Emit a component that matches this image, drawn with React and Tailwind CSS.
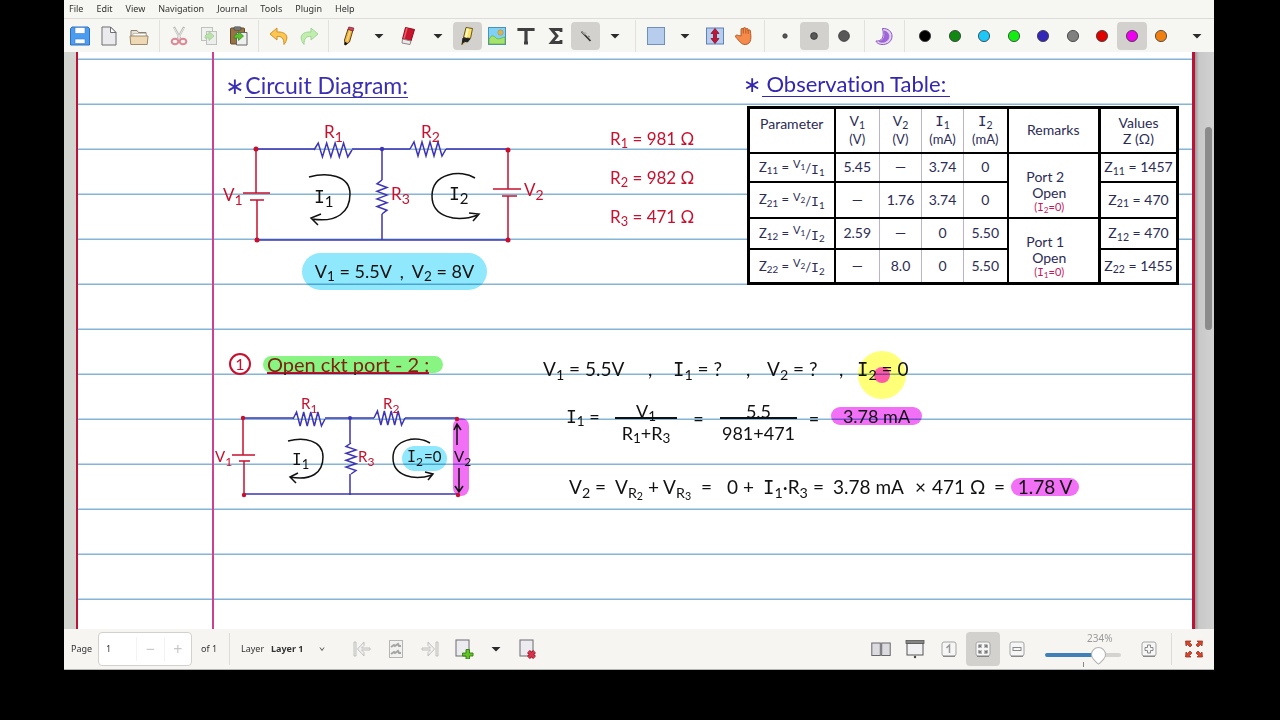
import clsx from "clsx";
import React, { useState } from "react";

const COLORS = [
	{ name: "Black", value: "#000000" },
	{ name: "Green", value: "#118811" },
	{ name: "Light blue", value: "#1cc8f8" },
	{ name: "Light green", value: "#12ee12" },
	{ name: "Blue", value: "#3328b8" },
	{ name: "Gray", value: "#808080" },
	{ name: "Red", value: "#e00000" },
	{ name: "Magenta", value: "#f000f0" },
	{ name: "Orange", value: "#f08010" },
];

const MENUS = ["File", "Edit", "View", "Navigation", "Journal", "Tools", "Plugin", "Help"];

/* ---------- toolbar icons, all on a 20x20 grid ---------- */

const Icon = ({ children, dim }) => (
	<svg
		viewBox="0 0 20 20"
		className={clsx("w-5 h-5 shrink-0", dim && "opacity-50")}
		fill="none"
		aria-hidden="true">
		{children}
	</svg>
);

const SaveIcon = () => (
	<Icon>
		<path d="M2 1h16l1.500 1.500V19H.5V2.500z" fill="#4a9df0" stroke="#2f6fc0" />
		<rect x="5" y="1.500" width="10" height="6" fill="#fff" stroke="#3a7fd0" strokeWidth=".6" />
		<rect x="5" y="13" width="10" height="4.500" fill="#fff" stroke="#3a7fd0" strokeWidth=".6" />
	</Icon>
);

const NewIcon = () => (
	<Icon>
		<path d="M3 1h8.500L17 6.500V19H3z" fill="#ebebee" stroke="#6e6e74" />
		<path d="M11.500 1v5.500H17z" fill="#fff" stroke="#6e6e74" />
	</Icon>
);

const OpenIcon = () => (
	<Icon>
		<path d="M2 17V4.500h6l1.500 2H17V17z" fill="#e9e2d6" stroke="#8c8273" />
		<path d="M4 7.500h13v4H4z" fill="#fff" stroke="#aaa294" strokeWidth=".6" />
		<path d="M1 10h18l-.8 8.500H1.800z" fill="#efd9b4" stroke="#9b8a6c" />
	</Icon>
);

const CutIcon = () => (
	<Icon dim>
		<path d="M5 1l6.500 12M15 1L8.500 13" stroke="#777" strokeWidth="2.200" />
		<path d="M5.300 2l6 11M14.700 2l-6 11" stroke="#ddd" />
		<ellipse cx="6" cy="15.500" rx="3.300" ry="2.800" stroke="#c3203c" strokeWidth="2" />
		<ellipse cx="14" cy="15.500" rx="3.300" ry="2.800" stroke="#c3203c" strokeWidth="2" />
	</Icon>
);

const CopyIcon = () => (
	<Icon dim>
		<rect x="2.500" y="1.500" width="11" height="13" fill="#eef0f0" stroke="#88908c" />
		<rect x="7.500" y="5.500" width="10" height="13" fill="#e4e8e6" stroke="#88908c" />
		<path d="M6 12c0-3 1-4 4-4V5.500l5 4.500-5 4.500V12c-2 0-3 .5-4 0z" fill="#7fd35f" stroke="#47963a" strokeWidth=".7" />
	</Icon>
);

const PasteIcon = () => (
	<Icon>
		<rect x="1.500" y="2" width="14" height="16" rx="1" fill="#9a7440" stroke="#5f4a2a" />
		<rect x="5" y=".8" width="7" height="3.500" rx="1" fill="#777" stroke="#444" strokeWidth=".6" />
		<path d="M7.500 6.500H18V19H7.500z" fill="#edf0ee" stroke="#666" />
		<path d="M5 12c0-3 2-4 4.500-4V5.500l5 4.500-5 4.500V12C8 12 6 12.500 5 12z" fill="#5cc22e" stroke="#337d1c" strokeWidth=".7" />
	</Icon>
);

const UndoIcon = () => (
	<Icon>
		<path d="M8 2L1 8l7 6v-3.500c4.500-.5 7 1.500 7 8 6-8 2-13-7-12.500z" fill="#fbc653" stroke="#cf8f22" strokeLinejoin="round" />
	</Icon>
);

const RedoIcon = () => (
	<Icon dim>
		<path d="M12 2l7 6-7 6v-3.500c-4.500-.5-7 1.500-7 8-6-8-2-13 7-12.500z" fill="#8be86a" stroke="#4faf3c" strokeLinejoin="round" />
	</Icon>
);

const PencilIcon = () => (
	<Icon>
		<path d="M9 3l5 1-3.500 12-4.500 3-.5-5z" fill="#f3b43b" stroke="#4a3312" strokeWidth=".9" />
		<path d="M11.500 3.500L8 15" stroke="#fbd98a" strokeWidth="1.200" />
		<path d="M9 3.500l.8-2.500 5 1-.8 3z" fill="#d8425c" stroke="#6e1f2a" strokeWidth=".7" />
		<path d="M6 16.500V19l2.300-1.500z" fill="#111" stroke="#111" />
	</Icon>
);

const EraserIcon = () => (
	<Icon>
		<path d="M7.500 1.500l9 2L13 15l-8.500-2z" fill="#c8142c" stroke="#8a0c1e" />
		<path d="M9 2l-3 10.500" stroke="#ee5a68" strokeWidth="1.500" />
		<path d="M4.500 13l8.500 2-1 3.500-8-1.500z" fill="#eeeaea" stroke="#8f8585" />
	</Icon>
);

const HighlighterIcon = () => (
	<Icon>
		<path d="M9 1.500l6.500 1-2 10-7-1z" fill="#f9e36b" stroke="#69541a" />
		<path d="M10.800 2.500L9 11.500" stroke="#fff8c4" strokeWidth="2" />
		<path d="M6 12l7 1-2.500 3-2.500-.5-3 3z" fill="#222" stroke="#222" />
		<path d="M5 18.500l2.500-2.500v2z" fill="#e7bf25" />
	</Icon>
);

const ImageIcon = () => (
	<Icon>
		<rect x="1.500" y="1.500" width="17" height="17" fill="#7fd2f7" stroke="#4a90bd" />
		<circle cx="13.500" cy="6.500" r="2.700" fill="#d8b35a" stroke="#b58a38" strokeWidth=".6" />
		<path d="M2 13c3-5 5-3 7-1s5 0 9-1v7H2z" fill="#a4e46a" stroke="#62a83d" strokeWidth=".7" />
	</Icon>
);

const TextIcon = () => (
	<Icon>
		<path d="M3 5V3.500h14V5M10 3.500v13.500M8 17h4" stroke="#3f3f3f" strokeWidth="3.200" />
	</Icon>
);

const SigmaIcon = () => (
	<Icon>
		<path d="M15 6V3.500H5.500L11 10l-5.500 6.500H15V14" stroke="#3f3f3f" strokeWidth="2.800" />
	</Icon>
);

const WandIcon = () => (
	<Icon>
		<path d="M5.500 5.500l9 9.500" stroke="#333" strokeWidth="1.800" />
		<path d="M6 5.500l3 3.200" stroke="#fff" strokeWidth=".8" />
		<path d="M9 6.500l1 1M12 10l2 1" stroke="#777" />
	</Icon>
);

const RectIcon = () => (
	<Icon>
		<rect x="1.500" y="1.500" width="17" height="17" fill="#b6cdee" stroke="#6f8fc0" />
	</Icon>
);

const VerticalSpaceIcon = () => (
	<Icon>
		<rect x="1.500" y="2" width="17" height="16" fill="#b6cdee" stroke="#5f82b8" />
		<path d="M10 2.500l4 5h-2.500v5H14l-4 5-4-5h2.500v-5H6z" fill="#c0143a" stroke="#84102a" strokeWidth=".8" />
	</Icon>
);

const HandIcon = () => (
	<Icon>
		<path
			d="M7 10V3.500c0-1.500 2.300-1.500 2.300 0V2.800c0-1.600 2.500-1.600 2.500 0v.6c.3-1.400 2.400-1.200 2.400.3v1c.3-1.200 2.300-1 2.300.4 0 3 .8 5 .2 8.400-.5 3-2.500 5-5.500 5-4 0-5.500-3-9.500-7.500-1-1.500 1-2.500 2.500-1.500z"
			fill="#f58a4b"
			stroke="#a9501c"
			strokeWidth=".9"
		/>
		<path d="M9.300 3.500v4M11.800 3.500v4M14.200 4v4" stroke="#a9501c" strokeWidth=".8" />
	</Icon>
);

const Dot = ({ r, fill = "#585858" }) => (
	<Icon>
		<circle cx="10" cy="10" r={r} fill={fill} stroke="#333" strokeWidth=".8" />
	</Icon>
);

const FillIcon = () => (
	<Icon>
		<path d="M8.500 2.500C21 2 21 17.500 9.500 18.500c-4 .3-7-1.500-7.500-3.500 5 .5 9-3 6.500-12.500z" fill="#e4d2f5" stroke="#8a55c0" />
		<path d="M10 5c6 .5 7 9 .5 11-3 .8-4.500 0-5.500-.5C9.500 14.500 12 10 10 5z" fill="#a065dc" stroke="#8a55c0" strokeWidth=".6" />
	</Icon>
);

const Arrow = () => (
	<Icon>
		<path d="M5.500 8h9L10 12.500z" fill="#2b2b2b" />
	</Icon>
);

/* ---------- page bar icons ---------- */

const StepIcon = ({ flip }) => (
	<Icon dim>
		<g transform={flip ? "matrix(-1 0 0 1 20 0)" : undefined} stroke="#888" strokeWidth="1">
			<path d="M2 3h2v14H2z" fill="#e8e8e8" />
			<path d="M12 3L5.500 10l6.500 7v-3.500L9.500 11H18V9H9.500L12 6.500z" fill="#eee" />
		</g>
	</Icon>
);

const AnnotatedIcon = () => (
	<Icon dim>
		<rect x="3.500" y="1.500" width="13" height="17" fill="#eee" stroke="#777" />
		<path d="M5 8l3-2 1 1 3-2 1 2h2M5 15l3-2 1 1 3-2 1 2h2" stroke="#555" strokeWidth="2" />
	</Icon>
);

const AddPageIcon = () => (
	<Icon>
		<rect x="2" y="1" width="13" height="16" fill="#ececf0" stroke="#6b6b70" />
		<path d="M12 10.500h3.500V14H19v3h-3.500v3H12v-3H8.500v-3H12z" fill="#62c226" stroke="#347c14" strokeWidth=".9" />
	</Icon>
);

const DeletePageIcon = () => (
	<Icon>
		<rect x="2" y="1" width="13" height="16" fill="#ececf0" stroke="#6b6b70" />
		<path d="M10.500 12.500l6 6M16.500 12.500l-6 6" stroke="#8c1226" strokeWidth="4" />
		<path d="M10.500 12.500l6 6M16.500 12.500l-6 6" stroke="#d8344c" strokeWidth="2.500" />
	</Icon>
);

const PairedIcon = () => (
	<Icon>
		<rect x=".8" y="4" width="8.500" height="12.500" fill="#dcdce0" stroke="#66666c" />
		<rect x="10.700" y="4" width="8.500" height="12.500" fill="#dcdce0" stroke="#66666c" />
	</Icon>
);

const PresentIcon = () => (
	<Icon>
		<rect x="2" y="4" width="16" height="12" fill="#f1f1f4" stroke="#555" />
		<rect x="1" y="1.500" width="18" height="3" fill="#858585" stroke="#555" strokeWidth=".8" />
		<circle cx="10" cy="18" r="1.200" fill="#444" />
	</Icon>
);

const Tile = ({ children }) => (
	<Icon>
		<rect x="3" y="3" width="14" height="14" rx="2" fill="#f6f6f6" stroke="#a4a4a4" />
		<path d="M4 17.300h12" stroke="#777" />
		{children}
	</Icon>
);

const ZoomFitIcon = () => (
	<Tile>
		<path
			d="M6 9V6h3M11 6h3v3M14 11v3h-3M9 14H6v-3M6 6l2.500 2.500M14 6l-2.500 2.500M14 14l-2.500-2.500M6 14l2.500-2.500"
			stroke="#777"
			strokeWidth="1.200"
		/>
	</Tile>
);

const FullscreenIcon = () => (
	<Icon>
		<g fill="#d8452c" stroke="#8f2a18" strokeWidth=".7">
			<path d="M1.500 2H7L5.500 3.500 8 6 6 8 3.500 5.500 2 7z" />
			<path d="M18.500 2H13l1.500 1.500L12 6l2 2 2.500-2.500L18 7z" />
			<path d="M1.500 18H7l-1.500-1.500L8 14l-2-2-2.500 2.500L2 13z" />
			<path d="M18.500 18H13l1.500-1.500L12 14l2-2 2.500 2.500L18 13z" />
		</g>
	</Icon>
);

/* ---------- window chrome ---------- */

const Tool = ({ label, active, onClick, children }) => (
	<button
		type="button"
		aria-label={label}
		onClick={onClick}
		className={clsx(
			"flex-1 h-7 flex items-center justify-center rounded cursor-pointer",
			active && "bg-[#d3d1cd]"
		)}>
		{children}
	</button>
);

const Separator = () => (
	<div className="w-[11px] h-8 flex justify-center">
		<div className="w-px bg-[#e2e1dd]" />
	</div>
);

const Toolbar = () => {
	const [tool, setTool] = useState("Highlighter");
	const [size, setSize] = useState("Medium");
	const [color, setColor] = useState("Magenta");

	return (
		<div className="h-[34px] flex items-center pl-px border-t border-[#dddcd8]">
			<Tool label="Save"><SaveIcon /></Tool>
			<Tool label="New"><NewIcon /></Tool>
			<Tool label="Open"><OpenIcon /></Tool>
			<Separator />
			<Tool label="Cut"><CutIcon /></Tool>
			<Tool label="Copy"><CopyIcon /></Tool>
			<Tool label="Paste"><PasteIcon /></Tool>
			<Separator />
			<Tool label="Undo"><UndoIcon /></Tool>
			<Tool label="Redo"><RedoIcon /></Tool>
			<Separator />
			<Tool label="Pen" active={tool === "Pen"} onClick={() => setTool("Pen")}>
				<PencilIcon />
			</Tool>
			<Tool label="Pen options"><Arrow /></Tool>
			<Tool label="Eraser" active={tool === "Eraser"} onClick={() => setTool("Eraser")}>
				<EraserIcon />
			</Tool>
			<Tool label="Eraser options"><Arrow /></Tool>
			<Tool
				label="Highlighter"
				active={tool === "Highlighter"}
				onClick={() => setTool("Highlighter")}>
				<HighlighterIcon />
			</Tool>
			<Tool label="Image"><ImageIcon /></Tool>
			<Tool label="Text"><TextIcon /></Tool>
			<Tool label="Formula"><SigmaIcon /></Tool>
			<Tool label="Default tool" active><WandIcon /></Tool>
			<Tool label="Drawing type"><Arrow /></Tool>
			<Separator />
			<Tool label="Select rectangle"><RectIcon /></Tool>
			<Tool label="Selection type"><Arrow /></Tool>
			<Tool label="Vertical space"><VerticalSpaceIcon /></Tool>
			<Tool label="Hand"><HandIcon /></Tool>
			<Separator />
			<Tool label="Fine" active={size === "Fine"} onClick={() => setSize("Fine")}>
				<Dot r={2.2} />
			</Tool>
			<Tool label="Medium" active={size === "Medium"} onClick={() => setSize("Medium")}>
				<Dot r={3.4} />
			</Tool>
			<Tool label="Thick" active={size === "Thick"} onClick={() => setSize("Thick")}>
				<Dot r={5.4} />
			</Tool>
			<Separator />
			<Tool label="Fill"><FillIcon /></Tool>
			<Separator />
			{COLORS.map((c) => (
				<Tool
					key={c.name}
					label={c.name}
					active={color === c.name}
					onClick={() => setColor(c.name)}>
					<Dot r={5.6} fill={c.value} />
				</Tool>
			))}
			<button
				type="button"
				aria-label="More"
				className="w-[38px] h-7 flex items-center justify-center pl-1 cursor-pointer">
				<Arrow />
			</button>
		</div>
	);
};

const BarButton = ({ label, active, children }) => (
	<button
		type="button"
		aria-label={label}
		className={clsx(
			"w-[34px] h-[34px] flex items-center justify-center rounded cursor-pointer",
			active && "bg-[#d3d1cd]"
		)}>
		{children}
	</button>
);

const PageBar = () => {
	const [page, setPage] = useState("1");
	const [zoom, setZoom] = useState(234);

	return (
		<footer className="h-[41px] flex items-center justify-between bg-[#f6f5f2] border-b border-[#b5b5b5] text-[9px] pl-[7px] pr-[3px]">
			<div className="flex items-center">
				<label htmlFor="page" className="w-[27px]">
					Page
				</label>
				<div className="w-[94px] h-[34px] flex items-center bg-white border border-[#d3d1cd] rounded">
					<input
						id="page"
						value={page}
						onChange={(e) => setPage(e.target.value)}
						className="w-[37px] pl-[7px] outline-none"
					/>
					<button type="button" aria-label="Previous page" className="flex-1 text-base text-[#c8c8c8] border-l border-[#f3f3f3]">
						−
					</button>
					<button type="button" aria-label="Next page" className="flex-1 text-base text-[#c8c8c8] border-l border-[#f3f3f3]">
						+
					</button>
				</div>
				<span className="w-[37px] pl-[9px]">of 1</span>
				<div className="w-px h-8 bg-[#dddcd8]" />
				<label htmlFor="layer" className="w-[41px] pl-[11px]">
					Layer
				</label>
				<div className="w-[74px] flex items-center">
					<select id="layer" className="w-[48px] appearance-none font-bold outline-none">
						<option>Layer 1</option>
					</select>
					<svg viewBox="0 0 6 6" className="w-[6px] h-[6px]" fill="none" aria-hidden="true">
						<path d="M1 1.500l2 3 2-3" stroke="#555" />
					</svg>
				</div>
				<BarButton label="Previous annotated page"><StepIcon /></BarButton>
				<BarButton label="Annotated page"><AnnotatedIcon /></BarButton>
				<BarButton label="Next annotated page"><StepIcon flip /></BarButton>
				<BarButton label="Insert page"><AddPageIcon /></BarButton>
				<button type="button" aria-label="Insert options" className="w-[30px] flex justify-center">
					<Arrow />
				</button>
				<BarButton label="Delete page"><DeletePageIcon /></BarButton>
			</div>
			<div className="flex items-center">
				<BarButton label="Paired pages"><PairedIcon /></BarButton>
				<BarButton label="Presentation"><PresentIcon /></BarButton>
				<BarButton label="Zoom 100%">
					<Tile>
						<path d="M7.500 9l3-3v8" stroke="#999" strokeWidth="1.500" />
					</Tile>
				</BarButton>
				<BarButton label="Zoom fit" active><ZoomFitIcon /></BarButton>
				<BarButton label="Zoom out">
					<Tile>
						<rect x="6" y="8.500" width="8" height="3" stroke="#888" />
					</Tile>
				</BarButton>
				<div className="w-[98px] px-[11px] flex flex-col">
					<output htmlFor="zoom" className="h-3 leading-3 pl-[42px] text-[10px] text-[#9a9a9a]">
						{zoom}%
					</output>
					<input
						id="zoom"
						type="range"
						aria-label="Zoom"
						min="30"
						max="300"
						value={zoom}
						onChange={(e) => setZoom(Number(e.target.value))}
						className="w-full h-[22px] appearance-none bg-transparent [&::-webkit-slider-runnable-track]:h-1 [&::-webkit-slider-runnable-track]:rounded [&::-webkit-slider-runnable-track]:bg-[linear-gradient(to_right,#3f80b8_70%,#d5d3cf_70%)] [&::-webkit-slider-thumb]:appearance-none [&::-webkit-slider-thumb]:w-[15px] [&::-webkit-slider-thumb]:h-[15px] [&::-webkit-slider-thumb]:-mt-[6px] [&::-webkit-slider-thumb]:rounded-[50%_50%_2px_50%] [&::-webkit-slider-thumb]:rotate-45 [&::-webkit-slider-thumb]:bg-white [&::-webkit-slider-thumb]:border [&::-webkit-slider-thumb]:border-[#b0b0b0]"
					/>
					<div className="w-px h-[5px] -mt-1 ml-[38px] bg-[#888]" />
				</div>
				<BarButton label="Zoom in">
					<Tile>
						<path d="M8.500 6h3v2.500H14v3h-2.500V14h-3v-2.500H6v-3h2.500z" stroke="#888" />
					</Tile>
				</BarButton>
				<div className="w-px h-8 mx-[5px] bg-[#dddcd8]" />
				<BarButton label="Fullscreen"><FullscreenIcon /></BarButton>
			</div>
		</footer>
	);
};

/* ---------- handwritten content ---------- */

// Symbol with a subscript; a capital I gets its bars from the mono face
const Sym = ({ c, n }) => (
	<span>
		<span className={c === "I" ? "font-['DejaVu_Sans_Mono']" : undefined}>{c}</span>
		<sub>{n}</sub>
	</span>
);

const SvgSym = ({ x, y, c, n, size = 17, fill = "#c8102e" }) => (
	<text x={x} y={y} fontSize={size} fill={fill}>
		<tspan fontFamily={c === "I" ? "DejaVu Sans Mono" : undefined}>{c}</tspan>
		<tspan dy="4" fontSize={size - 3}>{n}</tspan>
	</text>
);

const zigzag = (from, to, amp) => {
	const step = (to - from) / 9;
	return Array.from({ length: 10 }, (_, i) => [
		from + i * step,
		i === 0 || i === 9 ? 0 : i % 2 ? -amp : amp,
	]);
};

const hRes = (from, to, y) =>
	zigzag(from, to, 7).map(([p, d]) => `${p},${y + d}`).join(" ");

const vRes = (x, from, to) =>
	zigzag(from, to, 5).map(([p, d]) => `${x + d},${p}`).join(" ");

const CircuitDiagram = () => (
	<svg
		viewBox="220 120 330 130"
		className="absolute left-[156px] top-[68px] w-[330px] h-[130px]"
		fill="none"
		strokeWidth="1.500">
		<g stroke="#3d35b5">
			<path d="M256 149h58M352 149h58M446 149h62M382 149v31M382 214v26M257 240h252" />
			<polyline points={hRes(314, 352, 150)} />
			<polyline points={hRes(410, 446, 149)} />
			<polyline points={vRes(382, 180, 214)} />
		</g>
		<path d="M256 150v43M243 193h27M250 200h14M257 200v40M508 150v39M493 189h28M502 196h15M508 196v44" stroke="#c8102e" />
		<g fill="#c8102e">
			<circle cx="256" cy="149" r="2.500" />
			<circle cx="257" cy="240" r="2.500" />
			<circle cx="508" cy="150" r="2.500" />
			<circle cx="508" cy="240" r="2.500" />
		</g>
		<circle cx="382" cy="149" r="2.200" fill="#3d35b5" />
		<g stroke="#111">
			<path d="M309 177c18-5 41-2 41 17 0 18-13 29-38 25M321 214l-10 4 7 7" />
			<path d="M475 178c-14-9-43-5-43 18 0 21 24 27 46 19M469 213l10 1-6 7" />
		</g>
		<SvgSym x={324} y={138} c="R" n="1" />
		<SvgSym x={421} y={138} c="R" n="2" />
		<SvgSym x={391} y={200} c="R" n="3" />
		<SvgSym x={223} y={201} c="V" n="1" />
		<SvgSym x={524} y={196} c="V" n="2" />
		<SvgSym x={314} y={203} c="I" n="1" size={18} fill="#111" />
		<SvgSym x={449} y={200} c="I" n="2" size={18} fill="#111" />
	</svg>
);

const OpenCircuit = () => (
	<>
		<div className="absolute left-[338px] top-[394px] w-[45px] h-[25px] rounded-full bg-[#8fe8fb] mix-blend-multiply" />
		<div className="absolute left-[389px] top-[366px] w-4 h-[78px] rounded-lg bg-[#f170f5] mix-blend-multiply" />
		<svg
			viewBox="210 395 270 110"
			className="absolute left-[146px] top-[343px] w-[270px] h-[110px]"
			fill="none"
			strokeWidth="1.500">
			<g stroke="#3d35b5">
				<path d="M243 418h50M325 418h49M405 418h53M350 418v25M350 474v21M244 494h214" />
				<polyline points={hRes(293, 325, 419)} />
				<polyline points={hRes(374, 405, 418)} />
				<polyline points={vRes(351, 443, 474)} />
			</g>
			<path d="M243 418v37M232 455h23M239 461h11M244 461v34" stroke="#c8102e" />
			<g fill="#c8102e">
				<circle cx="243" cy="418" r="2.200" />
				<circle cx="244" cy="495" r="2.200" />
				<circle cx="457" cy="419" r="2.200" />
				<circle cx="458" cy="495" r="2.200" />
			</g>
			<circle cx="350" cy="418" r="2" fill="#3d35b5" />
			<g stroke="#111">
				<path d="M288 441c16-4 35-1 35 16 0 16-12 24-33 20M298 473l-8 4 6 6" />
				<path d="M430 443c-13-8-37-4-37 15 0 18 21 23 39 17M425 472l8 2-5 6" />
				<path d="M457 445v-20M454 430l3-6 4 6M459 468v23M455 486l4 6 4-6" />
			</g>
			<SvgSym x={301} y={409} c="R" n="1" size={15} />
			<SvgSym x={383} y={409} c="R" n="2" size={15} />
			<SvgSym x={358} y={462} c="R" n="3" size={15} />
			<SvgSym x={215} y={462} c="V" n="1" size={15} />
			<SvgSym x={454} y={462} c="V" n="2" size={15} fill="#111" />
			<SvgSym x={292} y={465} c="I" n="1" size={16} fill="#111" />
			<SvgSym x={407} y={462} c="I" n="2" size={15} fill="#111" />
			<text x="424" y="462" fontSize="15" fill="#111">=0</text>
		</svg>
	</>
);

const Ratio = ({ row, col, v, i }) => (
	<span className="flex items-center justify-center gap-1 text-[13px] whitespace-nowrap">
		<span>
			Z<sub>{row}{col}</sub> =
		</span>
		<span>
			<span className="align-super text-[11px]">V<sub>{v}</sub></span>/<Sym c="I" n={i} />
		</span>
	</span>
);

const ROWS = [
	{ z: [1, 1], v: 1, i: 1, cells: ["5.45", "—", "3.74", "0"], value: "1457", h: "h-[29px]" },
	{ z: [2, 1], v: 2, i: 1, cells: ["—", "1.76", "3.74", "0"], value: "470", h: "h-[36px]" },
	{ z: [1, 2], v: 1, i: 2, cells: ["2.59", "—", "0", "5.50"], value: "470", h: "h-[31px]" },
	{ z: [2, 2], v: 2, i: 2, cells: ["—", "8.0", "0", "5.50"], value: "1455", h: "h-[35px]" },
];

const HEADS = [
	{ c: "V", n: "1", unit: "(V)" },
	{ c: "V", n: "2", unit: "(V)" },
	{ c: "I", n: "1", unit: "(mA)" },
	{ c: "I", n: "2", unit: "(mA)" },
];

const ObservationTable = () => (
	<table className="absolute left-[683px] top-[54px] w-[431px] table-fixed border-collapse border-3 border-black bg-white text-[#2b2b55] text-sm leading-[14px] text-center [&_td]:p-0 [&_th]:p-0 [&_th]:font-normal">
		<colgroup>
			<col className="w-[86px]" />
			<col className="w-[45px]" />
			<col className="w-[42px]" />
			<col className="w-[42px]" />
			<col className="w-[44px]" />
			<col className="w-[92px]" />
			<col className="w-[78px]" />
		</colgroup>
		<thead>
			<tr className="h-[45px] border-b-2 border-black">
				<th className="border-r-2 border-black">
					<div className="pb-3">Parameter</div>
				</th>
				{HEADS.map((h, i) => (
					<th
						key={h.c + h.n}
						className={i === 3 ? "border-r-2 border-black" : "border-r border-[#b9b4cc]"}>
						<div><Sym c={h.c} n={h.n} /></div>
						<div className="pt-1 text-[13px]">{h.unit}</div>
					</th>
				))}
				<th className="border-r-3 border-black">Remarks</th>
				<th>
					<div className="leading-[18px]">Values</div>
					<div>Z (Ω)</div>
				</th>
			</tr>
		</thead>
		<tbody>
			{ROWS.map((row, r) => (
				<tr key={row.z.join("")} className={row.h}>
					<td className="border-r-2 border-b-2 border-black">
						<Ratio row={row.z[0]} col={row.z[1]} v={row.v} i={row.i} />
					</td>
					{row.cells.map((cell, i) => (
						<td
							key={i}
							className={clsx(
								"border-b-2 border-b-black",
								i === 3 ? "border-r-2 border-r-black" : "border-r border-r-[#b9b4cc]"
							)}>
							{cell}
						</td>
					))}
					{r % 2 === 0 && (
						<td rowSpan={2} className="border-r-3 border-b-2 border-black">
							<div className="pt-3 pr-4 leading-4">{r === 0 ? "Port 2" : "Port 1"}</div>
							<div className="pr-2 leading-4">Open</div>
							<div className="pr-2 text-[11px] leading-3 text-[#c2185b]">
								(<Sym c="I" n={r === 0 ? "2" : "1"} />=0)
							</div>
						</td>
					)}
					<td className="border-b-2 border-black whitespace-nowrap">
						Z<sub>{row.z[0]}{row.z[1]}</sub> = {row.value}
					</td>
				</tr>
			))}
		</tbody>
	</table>
);

const Fraction = ({ top, bottom, width }) => (
	<span className={clsx("flex flex-col items-center", width)}>
		<span className="h-[22px] w-full border-b-2 border-[#111] text-center">{top}</span>
		<span className="h-7 leading-7">{bottom}</span>
	</span>
);

const Marked = ({ children, className }) => (
	<mark className={clsx("h-[18px] leading-[18px] rounded-full bg-[#f170f5] text-[#111] text-center mix-blend-multiply", className)}>
		{children}
	</mark>
);

const Notes = () => (
	<div className="absolute inset-0 font-[Lato,'DejaVu_Sans',sans-serif] [font-variant-ligatures:none] text-[#111] text-[19px] leading-5 whitespace-nowrap">
		<h2 className="absolute left-[161px] top-[21px] flex gap-px text-[23px] leading-6 text-[#3a2fb4]">
			<span>∗</span>
			<span className="border-b border-[#3a2fb4]">Circuit Diagram:</span>
		</h2>
		<CircuitDiagram />
		<p className="absolute left-[238px] top-[201px] w-[185px] h-[37px] leading-9 rounded-full bg-[#8fe8fb] mix-blend-multiply flex justify-center gap-1 text-lg">
			<span><Sym c="V" n="1" /> = 5.5V</span>
			<span className="w-3 text-center">,</span>
			<span><Sym c="V" n="2" /> = 8V</span>
		</p>

		<ul className="absolute left-[546px] top-[77px] flex flex-col gap-[19px] text-[17px] text-[#c8102e]">
			<li><Sym c="R" n="1" /> = 981 Ω</li>
			<li><Sym c="R" n="2" /> = 982 Ω</li>
			<li><Sym c="R" n="3" /> = 471 Ω</li>
		</ul>

		<h2 className="absolute left-[679px] top-[20px] flex gap-px text-[22px] leading-6 text-[#3326b0]">
			<span>∗</span>
			<span className="border-b border-[#3326b0] px-1">Observation Table:</span>
		</h2>
		<ObservationTable />

		<div className="absolute left-[165px] top-[301px] flex items-center gap-3 text-xl">
			<span className="w-[22px] h-[22px] leading-[18px] rounded-full border-2 border-[#c8102e] text-center text-[#c8102e] text-base">
				1
			</span>
			<h3 className="w-[180px] h-[17px] pl-1 leading-4 rounded-full bg-[#88f582] mix-blend-multiply text-[#7c2412]">
				<span className="inline-block border-b-2 border-[#c8102e]">Open ckt port - 2 :</span>
			</h3>
		</div>
		<OpenCircuit />

		<p className="absolute left-[479px] top-[307px] flex">
			<span className="w-[105px]"><Sym c="V" n="1" /> = 5.5V</span>
			<span className="w-[25px]">,</span>
			<span className="w-[73px]"><Sym c="I" n="1" /> = ?</span>
			<span className="w-[21px]">,</span>
			<span className="w-[72px]"><Sym c="V" n="2" /> = ?</span>
			<span className="w-[18px]">,</span>
			<span><Sym c="I" n="2" /> = 0</span>
		</p>
		{/* cursor halo */}
		<div className="absolute left-[794px] top-[299px] w-12 h-12 rounded-full bg-[#ffff78] mix-blend-multiply flex items-center justify-center">
			<div className="w-4 h-4 rounded-full bg-[#ff5aa8]" />
		</div>

		<div className="absolute left-[502px] top-[345px] flex items-center text-lg">
			<span className="w-[49px] pb-3"><Sym c="I" n="1" /> =</span>
			<Fraction
				width="w-[62px]"
				top={<Sym c="V" n="1" />}
				bottom={<><Sym c="R" n="1" />+<Sym c="R" n="3" /></>}
			/>
			<span className="w-[43px] pb-2 text-center">=</span>
			<Fraction width="w-[77px]" top="5.5" bottom="981+471" />
			<span className="w-[34px] pb-2 text-center">=</span>
			<Marked className="w-[91px] mb-3">3.78 mA</Marked>
		</div>

		<p className="absolute left-[505px] top-[425px] flex items-center">
			<span className="w-[46px]"><Sym c="V" n="2" /> =</span>
			<span className="w-[86px]">
				V<sub>R<sub>2</sub></sub> + V<sub>R<sub>3</sub></sub>
			</span>
			<span className="w-[26px]">=</span>
			<span className="w-[36px]">0 +</span>
			<span className="w-[50px]"><Sym c="I" n="1" />·<Sym c="R" n="3" /></span>
			<span className="w-[20px]">=</span>
			<span className="w-[82px]">3.78 mA</span>
			<span className="w-[17px]">×</span>
			<span className="w-[62px]">471 Ω</span>
			<span className="w-[17px]">=</span>
			<Marked className="w-[68px]">1.78 V</Marked>
		</p>
	</div>
);

const Canvas = () => (
	<main className="relative flex-1 min-h-0 flex overflow-hidden bg-[#d0d0d0]">
		<div className="w-3 bg-[#d2d4d0]" />
		<div className="flex-1 flex border-l-2 border-r-3 border-[#bd1238] bg-white bg-[repeating-linear-gradient(to_bottom,transparent_0px,transparent_6px,#c0daea_6px,#c0daea_7px,#86b4d4_7px,#86b4d4_8px,transparent_8px,transparent_45px)]">
			<div className="w-[136px] border-r-2 border-[#cf4090]" />
		</div>
		<div className="w-[19px] flex justify-end pt-[75px] pr-[2px] bg-[linear-gradient(to_right,#999_0px,#c8c8c8_4px,#d2d2d2_19px)]">
			<div className="w-[7px] h-[203px] rounded-full bg-[#8b8b8b]" />
		</div>
		<Notes />
	</main>
);

const App = () => (
	<div className="min-h-screen flex flex-col bg-black pl-16 pr-[66px] pb-[50px] font-['Noto_Sans',sans-serif] text-[#333]">
		<div className="flex-1 flex flex-col">
			<header className="bg-[#f6f6f2]">
				<nav className="h-[18px] flex items-center gap-[13px] pl-[5px] text-[9px]">
					{MENUS.map((m) => (
						<button key={m} type="button" className="cursor-pointer">
							{m}
						</button>
					))}
				</nav>
				<Toolbar />
			</header>
			<Canvas />
			<PageBar />
		</div>
	</div>
);

export default App;
